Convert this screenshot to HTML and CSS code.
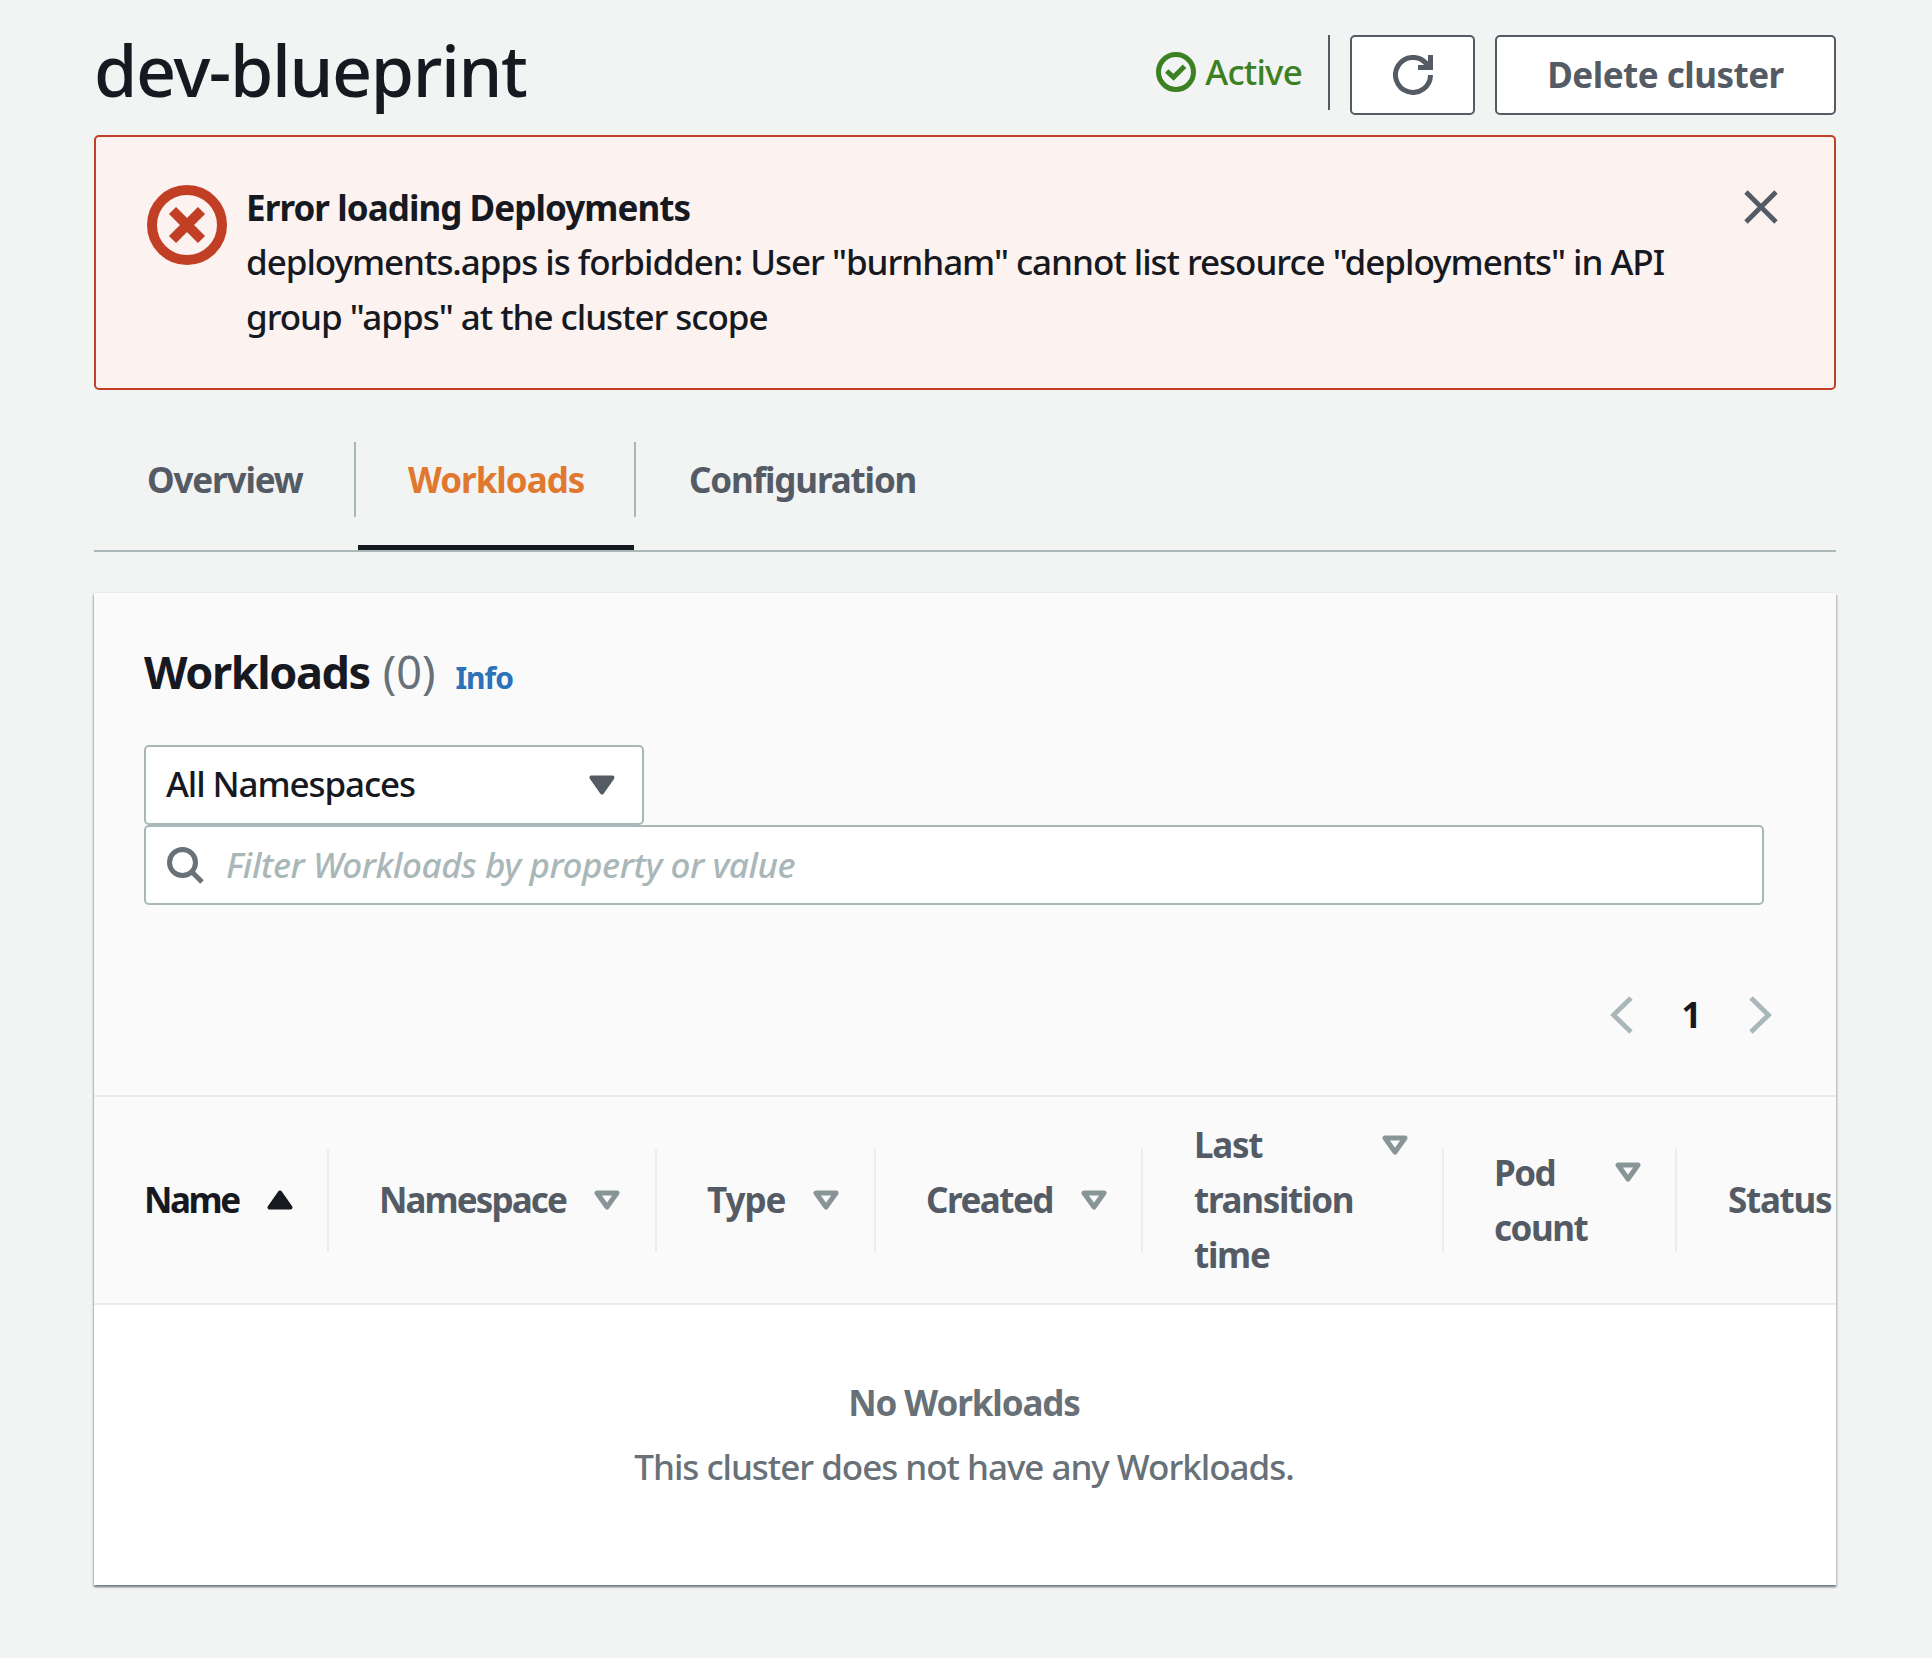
FILE: index.html
```
<!DOCTYPE html>
<html lang="en">
<head>
<meta charset="utf-8">
<title>dev-blueprint</title>
<link rel="stylesheet" href="styles.css">
</head>
<body>
<main class="page">
  <header class="page-header">
    <h1 class="title">dev-blueprint</h1>
    <div class="status">
      <svg class="status-icon" viewBox="0 0 16 16"><circle cx="8" cy="8" r="7"/><path d="M4.300 7.600L7 10.100l4.400-4.400"/></svg>
      <span class="status-text">Active</span>
    </div>
    <button class="btn btn-refresh" aria-label="Refresh"><svg viewBox="0 0 16 16"><path d="M15 8a7 7 0 1 1-1.700-4.600L15 5"/><path d="M10 5h5V0"/></svg></button>
    <button class="btn btn-delete">Delete cluster</button>
  </header>

  <section class="alert">
    <svg class="alert-icon" viewBox="0 0 16 16"><circle cx="8" cy="8" r="7"/><path d="M5.100 5.100l5.800 5.800M10.900 5.100l-5.800 5.800"/></svg>
    <div class="alert-body">
      <div class="alert-title">Error loading Deployments</div>
      <div class="alert-text">deployments.apps is forbidden: User "burnham" cannot list resource "deployments" in API<br>group "apps" at the cluster scope</div>
    </div>
    <svg class="alert-close" viewBox="0 0 34 34"><path d="M2 2l30 30M32 2L2 32"/></svg>
  </section>

  <nav class="tabs">
    <div class="tab tab-overview"><a class="tab-label">Overview</a></div>
    <div class="tab tab-workloads active"><a class="tab-label">Workloads</a></div>
    <div class="tab tab-config"><a class="tab-label">Configuration</a></div>
  </nav>

  <section class="panel">
    <div class="panel-header">
      <div class="heading"><h2>Workloads</h2><span class="counter">(0)</span><a class="info">Info</a></div>
      <div class="select"><span>All Namespaces</span><svg viewBox="0 0 26 20"><path d="M2.500 2.500h21L13 17.500z"/></svg></div>
      <div class="search"><svg viewBox="0 0 37 37"><circle cx="15.500" cy="15.500" r="13"/><path d="M24.500 24.500l10.500 10.500"/></svg><span>Filter Workloads by property or value</span></div>
      <div class="pagination">
        <svg viewBox="0 0 23 38"><path d="M21 2L3.500 19 21 36"/></svg>
        <span class="page-number">1</span>
        <svg viewBox="0 0 23 38"><path d="M2 2l17.500 17L2 36"/></svg>
      </div>
    </div>
    <div class="table-head">
      <div class="th col-name"><span class="label">Name</span><svg viewBox="0 0 26 20"><path d="M2.500 17.500h21L13 2.500z"/></svg></div>
      <div class="th col-namespace"><span class="label">Namespace</span><svg viewBox="0 0 26 20"><path d="M3 3h20L13 17z"/></svg></div>
      <div class="th col-type"><span class="label">Type</span><svg viewBox="0 0 26 20"><path d="M3 3h20L13 17z"/></svg></div>
      <div class="th col-created"><span class="label">Created</span><svg viewBox="0 0 26 20"><path d="M3 3h20L13 17z"/></svg></div>
      <div class="th col-transition"><span class="label">Last<br>transition<br>time</span><svg viewBox="0 0 26 20"><path d="M3 3h20L13 17z"/></svg></div>
      <div class="th col-pods"><span class="label">Pod<br>count</span><svg viewBox="0 0 26 20"><path d="M3 3h20L13 17z"/></svg></div>
      <div class="th col-status"><span class="label">Status</span></div>
    </div>
    <div class="empty">
      <div class="empty-title">No Workloads</div>
      <div class="empty-text">This cluster does not have any Workloads.</div>
    </div>
  </section>
</main>
</body>
</html>
```
FILE: styles.css
```
* { box-sizing: border-box; }
body {
  margin: 0;
  background: #f2f3f3;
  color: #16191f;
  font: 500 35px/55px "Noto Sans", "Open Sans", sans-serif;
  letter-spacing: -1.03px;
}
svg { display: block; flex: none; fill: none; }
h1, h2 { margin: 0; }
.page { width: 1742px; min-height: 1658px; margin-left: 94px; }

.page-header { display: flex; align-items: flex-start; height: 135px; padding-top: 35px; }
.title { margin: 0 auto 0 0; font-size: 70px; line-height: 70px; font-weight: 500; letter-spacing: -1.4px; }
.status { display: flex; height: 75px; padding-right: 26px; border-right: 2px solid #545b64; color: #3b8021; }
.status-icon { width: 40px; height: 40px; margin: 17px 9px 0 0; stroke: currentColor; stroke-width: 2; }
.status-text { margin-top: 9px; letter-spacing: -0.8px; }
.btn {
  display: flex; align-items: center; justify-content: center;
  height: 80px; padding: 0 0 2px; background: #fff; border: 2px solid #545b64; border-radius: 5px;
  color: #545b64; font: inherit; font-weight: 700; letter-spacing: -0.5px;
}
.btn-refresh { width: 125px; margin: 0 20px; padding: 0; }
.btn-refresh svg { width: 40px; height: 40px; stroke: currentColor; stroke-width: 2; }
.btn-delete { width: 341px; }

.alert {
  display: flex; align-items: flex-start; height: 255px; padding: 48px 51px 0;
  background: #fcf2f0; border: 2px solid #c13f24; border-radius: 5px;
}
.alert-icon { width: 80px; height: 80px; margin-right: 19px; stroke: #c13f24; stroke-width: 2; }
.alert-body { flex: 1; margin-top: -5px; white-space: nowrap; }
.alert-title { height: 54px; font-weight: 700; letter-spacing: -0.93px; }
.alert-close { width: 34px; height: 34px; margin: 5px 5px 0 0; stroke: #545b64; stroke-width: 4.8; }

.tabs { display: flex; height: 110px; margin-top: 52px; border-bottom: 2px solid #aab7b8; }
.tab { display: flex; flex-direction: column; }
.tab-overview { width: 262px; }
.tab-workloads { width: 280px; }
.tab-label { height: 75px; padding: 10px 0 0 52px; border-right: 2px solid #aab7b8; color: #545b64; font-weight: 700; letter-spacing: -1px; }
.tab-overview .tab-label { padding-left: 53px; letter-spacing: -1.15px; }
.tab-config .tab-label { padding-left: 53px; border-right: 0; letter-spacing: -1.15px; }
.active .tab-label { color: #e07830; }
.active::after { content: ""; height: 5px; margin: auto 2px 0; background: #16191f; }

.panel {
  height: 992px; margin-top: 41px; background: #fff;
  box-shadow: 0 2px 2px rgba(0, 28, 36, .3), 1px 2px 2px rgba(0, 28, 36, .2), -1px 2px 2px rgba(0, 28, 36, .2), 0 -1px 0 #eaeded;
}
.panel-header { height: 504px; padding: 51px 50px 0; background: #fafafa; border-bottom: 2px solid #eaeded; }
.heading { display: flex; align-items: baseline; height: 55px; }
.heading h2 { font-size: 45px; font-weight: 700; line-height: 55px; letter-spacing: -1.4px; }
.counter { margin-left: 13px; color: #687078; font-size: 45px; font-weight: 400; line-height: 55px; letter-spacing: 0; }
.info { margin-left: 20px; color: #2b72b8; font-size: 30px; font-weight: 700; letter-spacing: -1px; }
.select, .search { display: flex; height: 80px; padding: 9px 26px 0 20px; background: #fff; border: 2px solid #aab7b8; border-radius: 5px; }
.select { width: 500px; margin-top: 46px; justify-content: space-between; letter-spacing: -1.1px; }
.select svg { width: 26px; height: 20px; margin: 19px 1px 0 0; fill: #545b64; stroke: #545b64; stroke-width: 4; stroke-linejoin: round; }
.search { width: 1620px; padding-top: 10px; color: #aab7b8; font-style: italic; letter-spacing: -0.43px; }
.search svg { width: 37px; height: 37px; margin: 10px 22px 0 1px; stroke: #687078; stroke-width: 5; }
.pagination { display: flex; align-items: center; justify-content: flex-end; height: 55px; margin: 82px 14px 0 0; }
.pagination svg { width: 23px; height: 38px; stroke: #aab7b8; stroke-width: 4.8; }
.page-number { width: 116px; text-align: center; font-weight: 700; }

.table-head {
  display: grid; grid-template-columns: 235px 328px 219px 267px 301px 233px 159px; align-items: center;
  height: 208px; overflow: hidden; background: #fafafa; border-bottom: 2px solid #eaeded;
}
.th {
  display: flex; align-items: center; justify-content: space-between; height: 103px; padding: 0 35px 0 50px;
  border-right: 2px solid #eaeded; color: #545b64; font-weight: 700; letter-spacing: -1.3px; white-space: nowrap;
}
.label { margin-top: -2px; }
.th svg { width: 26px; height: 20px; margin-right: -1px; stroke: #879596; stroke-width: 5; stroke-linejoin: round; }
.col-name { color: #16191f; letter-spacing: -2.4px; }
.col-name svg { stroke: #16191f; stroke-width: 4; fill: #16191f; }
.col-namespace { letter-spacing: -1.9px; }
.col-namespace svg, .col-type svg { margin-right: 0; }
.col-type { letter-spacing: -1px; }
.col-created { letter-spacing: -1.5px; }
.col-transition { padding-left: 51px; }
.col-transition svg { margin-bottom: 110px; }
.col-pods { padding-left: 50px; letter-spacing: -1.5px; }
.col-pods .label { margin-top: -1px; }
.col-pods svg { margin-bottom: 56px; }
.col-status { padding: 0 0 0 51px; border-right: 0; }

.empty { padding: 70px 2px 0 0; text-align: center; color: #687078; }
.empty-title { font-weight: 700; letter-spacing: -1.1px; }
.empty-text { margin-top: 9px; }
```
